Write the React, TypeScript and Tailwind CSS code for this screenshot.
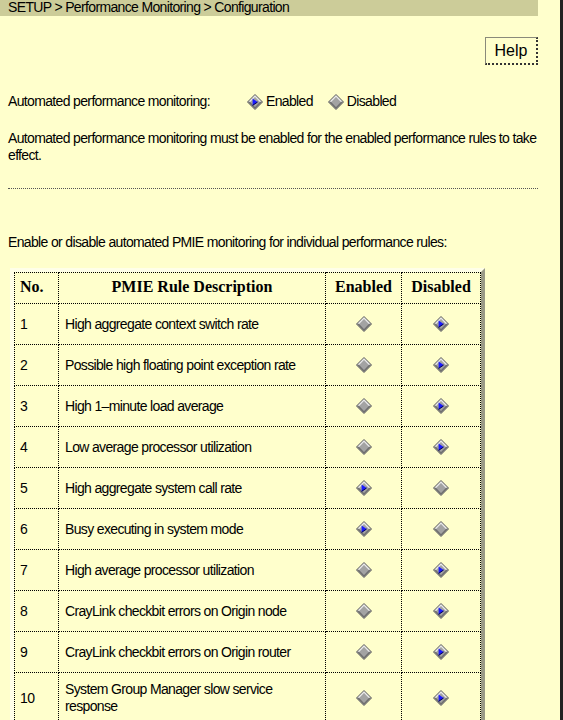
import React from "react"

const rules = [
  { n: 1, text: "High aggregate context switch rate", on: false },
  { n: 2, text: "Possible high floating point exception rate", on: false },
  { n: 3, text: "High 1\u2013minute load average", on: false },
  { n: 4, text: "Low average processor utilization", on: false },
  { n: 5, text: "High aggregate system call rate", on: true },
  { n: 6, text: "Busy executing in system mode", on: true },
  { n: 7, text: "High average processor utilization", on: false },
  { n: 8, text: "CrayLink checkbit errors on Origin node", on: false },
  { n: 9, text: "CrayLink checkbit errors on Origin router", on: false },
  { n: 10, text: "System Group Manager slow service response", on: false },
]

function Diamond({ checked }: { checked?: boolean }) {
  return (
    <svg width="16" height="16" viewBox="0 0 16 16" className="block shrink-0">
      <polygon points="8,0.5 15.5,8 8,15.5 0.5,8" fill="#a3a3a3" stroke="#5c5c5c" strokeWidth="1" />
      <polyline points="2.2,8 8,2.2 13.8,8" fill="none" stroke="#ececec" strokeWidth="1.2" />
      <polyline points="13.8,8 8,13.8 2.2,8" fill="none" stroke="#6e6e6e" strokeWidth="1.2" />
      {checked && (
        <>
          <polygon points="5.6,4.6 10.6,8 5.6,11.4" fill="#1a1aff" />
          <polyline points="5.6,11.4 10.6,8" fill="none" stroke="#000055" strokeWidth="1" />
        </>
      )}
    </svg>
  )
}

function Radio({ label, checked }: { label: string; checked?: boolean }) {
  return (
    <span className="inline-flex items-center gap-[3px]">
      <Diamond checked={checked} />
      <span>{label}</span>
    </span>
  )
}

export default function App() {
  return (
    <div
      className="min-h-screen bg-[#ffffcc] text-black text-[14px] leading-[17px] tracking-[-0.65px] flex"
      style={{ fontFamily: '"Liberation Sans", Arial, sans-serif' }}
    >
      <div className="w-[538px] shrink-0">
        <div className="h-[16px] bg-[#cccc99] pl-[8px] leading-[15px] text-[14px]">
          SETUP &gt; Performance Monitoring &gt; Configuration
        </div>

        <div className="flex justify-end mt-[21px]">
          <button className="w-[53px] h-[28px] bg-[#ffffcc] border border-b-2 border-r-2 [border-style:solid_dotted_dotted_solid] border-t-[#8a8a7a] border-l-[#8a8a7a] border-b-[#333] border-r-[#333] text-[16px] tracking-normal">
            Help
          </button>
        </div>

        <div className="flex items-center mt-[28px] pl-[8px] h-[17px]">
          <span className="w-[239px]">Automated performance monitoring:</span>
          <span className="flex gap-[15px]">
            <Radio label="Enabled" checked />
            <Radio label="Disabled" />
          </span>
        </div>

        <p className="pl-[8px] mt-[20px]">
          Automated performance monitoring must be enabled for the enabled performance rules to take effect.
        </p>

        <div className="ml-[8px] mt-[24px] border-t border-dotted border-[#555]" />

        <p className="pl-[8px] mt-[45px]">
          Enable or disable automated PMIE monitoring for individual performance rules:
        </p>

        <div className="ml-[10px] mt-[17px] inline-block border-4 border-t-[#ffffe8] border-l-[#ffffe8] border-r-[#9a9a86] border-b-[#9a9a86]">
          <table className="border-collapse">
            <thead>
              <tr className="h-[31px] tracking-normal" style={{ fontFamily: '"Liberation Serif", serif' }}>
                <th className="w-[44px] border border-dotted border-black text-left pl-[5px] pb-[3px] font-bold text-[16px]">No.</th>
                <th className="w-[267px] border border-dotted border-black text-center pb-[3px] font-bold text-[16px]">PMIE Rule Description</th>
                <th className="w-[76px] border border-dotted border-black text-center pb-[3px] font-bold text-[16px]">Enabled</th>
                <th className="w-[79px] border border-dotted border-black text-center pb-[3px] font-bold text-[16px]">Disabled</th>
              </tr>
            </thead>
            <tbody>
              {rules.map((r) => (
                <tr key={r.n} className="h-[41px]">
                  <td className="border border-dotted border-black pl-[5px]">{r.n}</td>
                  <td className="border border-dotted border-black pl-[6px] pr-[14px] py-[8px]">{r.text}</td>
                  <td className="border border-dotted border-black">
                    <div className="flex justify-center">
                      <Diamond checked={r.on} />
                    </div>
                  </td>
                  <td className="border border-dotted border-black">
                    <div className="flex justify-center">
                      <Diamond checked={!r.on} />
                    </div>
                  </td>
                </tr>
              ))}
            </tbody>
          </table>
        </div>
      </div>
      <div className="flex-1" />
      <div className="w-[3px] bg-[#222]" />
    </div>
  )
}
